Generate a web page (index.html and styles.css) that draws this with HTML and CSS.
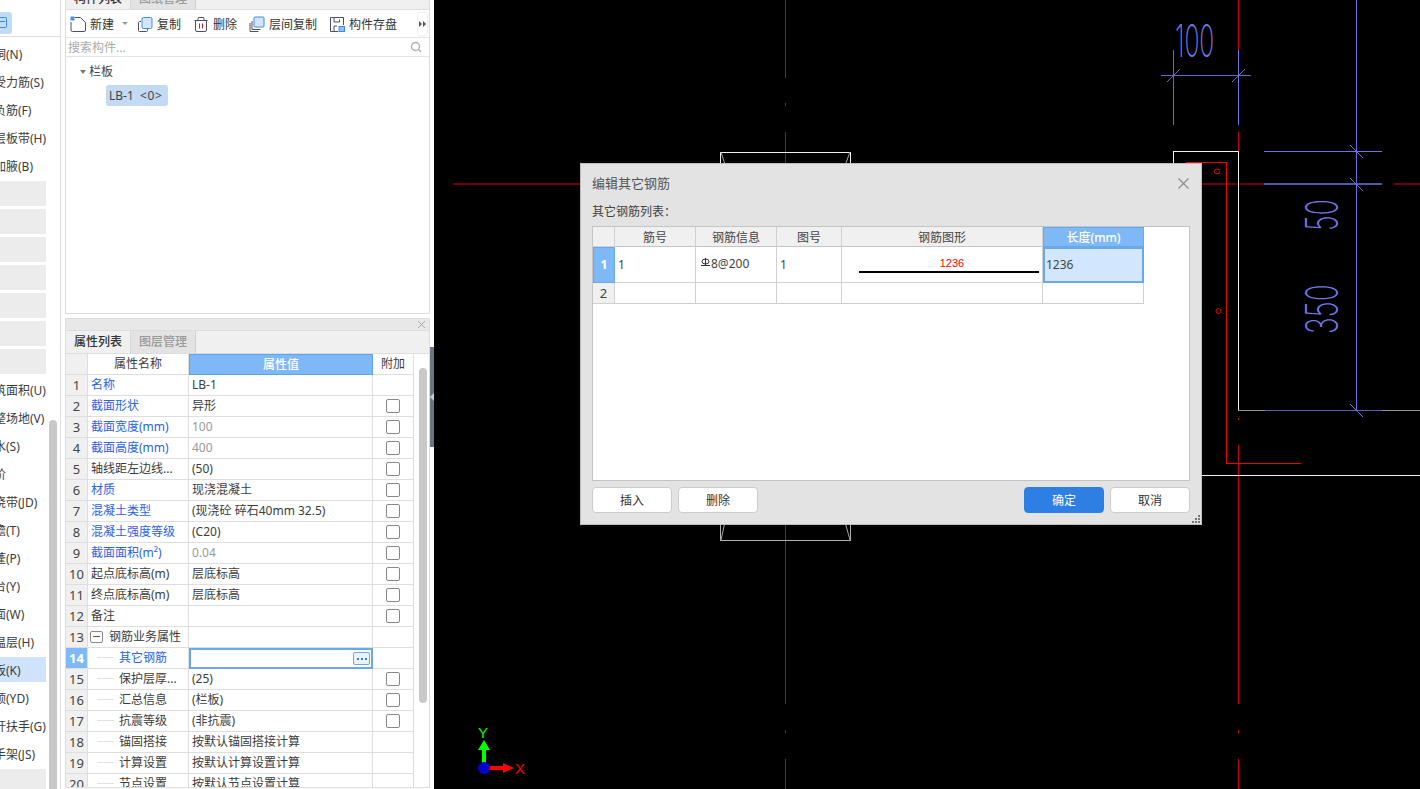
FILE: index.html
```html
<!DOCTYPE html>
<html lang="zh">
<head>
<meta charset="utf-8">
<title>编辑其它钢筋</title>
<link rel="stylesheet" href="styles.css">
</head>
<body>
<div class="app">
  <nav class="side">
    <div class="side-top"><span class="side-ico"><i></i></span></div>
    <ul class="side-list">
      <li>板洞(N)</li><li>板受力筋(S)</li><li>板负筋(F)</li><li>楼层板带(H)</li><li>板加腋(B)</li>
      <li class="blk"></li><li class="blk"></li><li class="blk"></li><li class="blk"></li><li class="blk"></li><li class="blk"></li><li class="blk"></li>
      <li>建筑面积(U)</li><li>平整场地(V)</li><li>散水(S)</li><li>台阶</li><li>后浇带(JD)</li><li>挑檐(T)</li><li>雨蓬(P)</li><li>阳台(Y)</li><li>屋面(W)</li><li>保温层(H)</li><li class="sel">栏板(K)</li><li>压顶(YD)</li><li>栏杆扶手(G)</li><li>脚手架(JS)</li><li class="blk"></li>
    </ul>
    <div class="side-thumb"></div>
  </nav>

  <div class="mid">
    <section class="panel panel-top">
      <div class="tabs"><span class="tab on">构件列表</span><span class="tab">图纸管理</span></div>
      <div class="toolbar">
        <span class="tool">
          <svg width="16" height="16" viewBox="0 0 16 16"><path d="M5 1.500H10.500L15.500 6.500V14A1.500 1.500 0 0 1 14 15.500H2.500A1.500 1.500 0 0 1 1 14V6" fill="none" stroke="#4a5060"/><rect x="0.500" y="0.500" width="4" height="4" fill="#4a90e8"/></svg>新建<b class="drop"></b></span>
        <span class="tool">
          <svg width="16" height="16" viewBox="0 0 16 16"><path d="M4 5.500H2.500A1 1 0 0 0 1.500 6.500V14.500A1 1 0 0 0 2.500 15.500H9.500A1 1 0 0 0 10.500 14.500V13" fill="none" stroke="#4a5060"/><rect x="5" y="1.500" width="10" height="11" rx="1.500" fill="#d3e6fb" stroke="#3f8ae6"/></svg>复制</span>
        <span class="tool">
          <svg width="16" height="16" viewBox="-1 0 16 16"><path d="M0.500 4.500H13.500M1.500 4.500V14A1.500 1.500 0 0 0 3 15.500H11A1.500 1.500 0 0 0 12.500 14V4.500M4 4.500V2.500A1 1 0 0 1 5 1.500H9A1 1 0 0 1 10 2.500V4.500" fill="none" stroke="#4a5060"/><path d="M5.500 7.500V12.500M8.500 7.500V12.500" stroke="#e02020"/></svg>删除</span>
        <span class="tool">
          <svg width="16" height="16" viewBox="0 0 16 16"><path d="M1 7V15.500H9.500M3 5V13.500H11.500" fill="none" stroke="#4a5060"/><rect x="5" y="1" width="10" height="10" rx="1" fill="#d3e6fb" stroke="#3f8ae6"/></svg>层间复制</span>
        <span class="tool">
          <svg width="16" height="16" viewBox="0 0 16 16"><path d="M9 15.500H1.500V1.500H14.500V9M5 1.500V6H10.500V3.500M5 15.500V10H8" fill="none" stroke="#4a5060"/><rect x="10" y="10.500" width="5.500" height="5" fill="#8fc0f5" stroke="#3f8ae6"/></svg>构件存盘</span>
        <span class="more"><i></i><i></i></span>
      </div>
      <div class="search"><span>搜索构件...</span>
        <svg width="12" height="12" viewBox="0 0 12 12"><circle cx="5.500" cy="5.500" r="4" fill="none" stroke="#b0b0b0" stroke-width="1.300"/><path d="M8.500 8.500L11 11" stroke="#b0b0b0" stroke-width="1.500"/></svg>
      </div>
      <div class="tree">
        <div class="tree-root"><b class="caret"></b>栏板</div>
        <div class="tree-leaf">LB-1 &nbsp;<span class="leaf-n">&lt;0&gt;</span></div>
      </div>
    </section>

    <section class="panel panel-bot">
      <div class="panel-head"><svg width="9" height="9" viewBox="0 0 9 9"><path d="M1 1L8 8M8 1L1 8" stroke="#aaa"/></svg></div>
      <div class="tabs tabs-low"><span class="tab on">属性列表</span><span class="tab">图层管理</span></div>
      <div class="prop-wrap">
        <div class="prop-grid">
          <div class="c n"></div><div class="c h">属性名称</div><div class="c h hv">属性值</div><div class="c h hc">附加</div>

          <div class="c n">1</div><div class="c k">名称</div><div class="c v">LB-1</div><div class="c a"></div>
          <div class="c n">2</div><div class="c k">截面形状</div><div class="c v">异形</div><div class="c a"><i class="chk"></i></div>
          <div class="c n">3</div><div class="c k">截面宽度(mm)</div><div class="c v g">100</div><div class="c a"><i class="chk"></i></div>
          <div class="c n">4</div><div class="c k">截面高度(mm)</div><div class="c v g">400</div><div class="c a"><i class="chk"></i></div>
          <div class="c n">5</div><div class="c">轴线距左边线...</div><div class="c v">(50)</div><div class="c a"><i class="chk"></i></div>
          <div class="c n">6</div><div class="c k">材质</div><div class="c v">现浇混凝土</div><div class="c a"><i class="chk"></i></div>
          <div class="c n">7</div><div class="c k">混凝土类型</div><div class="c v">(现浇砼 碎石40mm 32.5)</div><div class="c a"><i class="chk"></i></div>
          <div class="c n">8</div><div class="c k">混凝土强度等级</div><div class="c v">(C20)</div><div class="c a"><i class="chk"></i></div>
          <div class="c n">9</div><div class="c k">截面面积(m²)</div><div class="c v g">0.04</div><div class="c a"><i class="chk"></i></div>
          <div class="c n">10</div><div class="c">起点底标高(m)</div><div class="c v">层底标高</div><div class="c a"><i class="chk"></i></div>
          <div class="c n">11</div><div class="c">终点底标高(m)</div><div class="c v">层底标高</div><div class="c a"><i class="chk"></i></div>
          <div class="c n">12</div><div class="c">备注</div><div class="c v"></div><div class="c a"><i class="chk"></i></div>
          <div class="c n">13</div><div class="c"><i class="minus"></i>钢筋业务属性</div><div class="c v"></div><div class="c a"></div>
          <div class="c n sel">14</div><div class="c sub k"><i class="dash"></i>其它钢筋</div><div class="c v edit"><span class="dots"><i></i><i></i><i></i></span></div><div class="c a"></div>
          <div class="c n">15</div><div class="c sub"><i class="dash"></i>保护层厚...</div><div class="c v">(25)</div><div class="c a"><i class="chk"></i></div>
          <div class="c n">16</div><div class="c sub"><i class="dash"></i>汇总信息</div><div class="c v">(栏板)</div><div class="c a"><i class="chk"></i></div>
          <div class="c n">17</div><div class="c sub"><i class="dash"></i>抗震等级</div><div class="c v">(非抗震)</div><div class="c a"><i class="chk"></i></div>
          <div class="c n">18</div><div class="c sub"><i class="dash"></i>锚固搭接</div><div class="c v">按默认锚固搭接计算</div><div class="c a"></div>
          <div class="c n">19</div><div class="c sub"><i class="dash"></i>计算设置</div><div class="c v">按默认计算设置计算</div><div class="c a"></div>
          <div class="c n">20</div><div class="c sub"><i class="dash"></i>节点设置</div><div class="c v">按默认节点设置计算</div><div class="c a"></div>
        </div>
        <div class="prop-scroll"><div class="prop-thumb"></div></div>
      </div>
    </section>
    <div class="splitter"></div>
  </div>

  <main class="canvas">
    <svg class="cad" width="986" height="789" viewBox="434 0 986 789">
      <g fill="none" stroke-width="1" shape-rendering="crispEdges">
        <path d="M453 184H580" stroke="#700008" stroke-width="2"/>
        <path d="M1202 184H1264M1394 184H1420" stroke="#700008" stroke-width="2"/>
        <path d="M785.500 0V78M785.500 103V106M785.500 132V163M785.500 524V704M785.500 730V733M785.500 759V789" stroke="#c80014"/>
        <path d="M1238.500 0V50M1238.500 132V152M1238.500 418V420M1238.500 445V704M1238.500 730V733M1238.500 759V789" stroke="#c80014"/>
        <path d="M1238.500 50V125" stroke="#7078e8"/>
        <path d="M1173.500 50V125M1161 75.500H1251" stroke="#6468c8"/>
        <path d="M1356.500 0V411M1264 151.500H1382" stroke="#6c70e0"/>
        <path d="M1264 184H1382" stroke="#5458a8" stroke-width="2"/>
        <path d="M1173.500 163V151.500H1238.500V410.500" stroke="#f0f0f0"/>
        <path d="M1238 410.500H1265M1382 410.500H1420" stroke="#909090"/>
        <path d="M1265 410.500H1382" stroke="#5a5eb8" stroke-width="1"/>
        <path d="M1201 475.500H1420" stroke="#f0f0f0"/>
        <path d="M720.500 163V152H850.500V163" stroke="#f0f0f0"/>
        <path d="M720.500 524V540.500H850.500V524" stroke="#b0b0b0"/>
        <path d="M1186 162.500H1226.500V463.500H1301" stroke="#f00000"/>
      </g>
      <g fill="none" stroke-width="1">
        <path d="M721 152L724.500 163M850 152L846 163M724.500 524L721 540M845.500 524L850 540" stroke="#a8a8a8"/>
        <path d="M1167 82L1180 69M1232 82L1245 69" stroke="#6468c8"/>
        <path d="M1350 145L1363 158M1350 178L1363 191M1350 404L1363 417" stroke="#6c70e0"/>
        <circle cx="1217" cy="171.500" r="2.500" stroke="#f00000"/>
        <circle cx="1218.500" cy="311" r="2.500" stroke="#f00000"/>
      </g>
      <text class="dim" transform="translate(1175 57) scale(0.55 1)">100</text>
      <text class="dim" transform="translate(1338 231) rotate(-90) scale(0.6 1)">50</text>
      <text class="dim" transform="translate(1338 334) rotate(-90) scale(0.62 1)">350</text>
      <g>
        <path d="M484 745V766" stroke="#00ff00" stroke-width="4"/>
        <path d="M484 740L490 750H478Z" fill="#00ff00"/>
        <path d="M486 768H506" stroke="#ff0000" stroke-width="4"/>
        <path d="M514 768L503 763V773Z" fill="#ff0000"/>
        <circle cx="484" cy="768" r="6" fill="#0000d0"/>
        <text class="axis ay" x="478" y="738">Y</text>
        <text class="axis ax" x="515" y="774">X</text>
      </g>
    </svg>

    <div class="dialog">
      <header class="dlg-head">
        <h1>编辑其它钢筋</h1>
        <svg width="13" height="13" viewBox="0 0 13 13"><path d="M1.500 1.500L11.500 11.500M11.500 1.500L1.500 11.500" stroke="#8a8a8a" stroke-width="1.100"/></svg>
      </header>
      <div class="dlg-label">其它钢筋列表：</div>
      <div class="dlg-table">
        <div class="rgrid">
          <div class="r n2"></div><div class="r rh">筋号</div><div class="r rh">钢筋信息</div><div class="r rh">图号</div><div class="r rh">钢筋图形</div><div class="r rh rh-sel">长度(mm)</div>
          <div class="r n2 sel">1</div><div class="r">1</div><div class="r r-bar"><svg class="bar-mark" width="9" height="9" viewBox="0 0 9 9"><ellipse cx="4.500" cy="3.500" rx="3.500" ry="2.500" fill="none" stroke="#333"/><path d="M4.500 0V7.500M0 7.500H9" stroke="#333"/></svg>8@200</div><div class="r">1</div>
          <div class="r shape"><span class="len">1236</span><span class="line"></span></div>
          <div class="r r-sel">1236</div>
          <div class="r n2">2</div><div class="r"></div><div class="r"></div><div class="r"></div><div class="r"></div><div class="r"></div>
        </div>
      </div>
      <footer class="dlg-foot">
        <button class="btn">插入</button>
        <button class="btn">删除</button>
        <span class="spacer"></span>
        <button class="btn primary">确定</button>
        <button class="btn">取消</button>
      </footer>
      <span class="grip"><i></i><i></i><i></i><i></i><i></i><i></i></span>
    </div>
  </main>
</div>
</body>
</html>
```
FILE: styles.css
```css
* { box-sizing: border-box; }
html, body { margin: 0; height: 100%; overflow: hidden; background: #000; }
body, button { font-family: "Noto Sans", "Noto Sans CJK SC", sans-serif; font-size: 12px; color: #3c3c3c; }
i, b { display: inline-block; font-style: normal; }
.app { display: flex; width: 1420px; height: 789px; overflow: hidden; background: #000; }

/* left strip */
.side { position: relative; width: 61px; flex: none; background: #fff; border-right: 1px solid #ddd; overflow: hidden; }
.side-top { height: 37px; padding-top: 12px; border-bottom: 1px solid #ddd; }
.side-ico { display: block; width: 12px; height: 22px; background: #c2dbf5; border-radius: 0 3px 3px 0; position: relative; }
.side-ico i { position: absolute; left: 0; top: 5px; width: 7px; height: 11px; border: 1px solid #3f8ae6; border-left: 0; border-radius: 0 2px 2px 0; }
.side-ico i::after { content: ""; position: absolute; left: 0; right: 1px; top: 3px; height: 1px; background: #3f8ae6; }
.side-list { list-style: none; margin: 0; padding: 3px 0 0; }
.side-list li { height: 28px; line-height: 30px; text-indent: -18px; white-space: nowrap; overflow: hidden; width: 60px; }
.side-list li.blk { width: 46px; background: #ececec; background-clip: padding-box; border-top: 1px solid #fff; border-bottom: 2px solid #fff; }
.side-list li.sel { width: 46px; background: #cfe4fc; background-clip: padding-box; border-top: 1px solid #fff; border-bottom: 2px solid #fff; line-height: 28px; }
.side-thumb { position: absolute; left: 49px; top: 420px; width: 8px; height: 369px; background: #c8c8c8; border-radius: 4px 4px 0 0; }

/* middle */
.mid { position: relative; width: 373px; flex: none; background: #fff; padding: 0 4px 0 4px; display: flex; flex-direction: column; }
.panel { border: 1px solid #ddd; background: #fff; }
.panel-top { height: 327px; margin-top: -13px; flex: none; display: flex; flex-direction: column; }
.tabs { height: 22px; flex: none; display: flex; background: #f0f0f0; border-bottom: 1px solid #ddd; }
.tabs-low { height: 23px; }
.tab { width: 65px; text-align: center; line-height: 21px; font-weight: 500; color: #9a9a9a; background: #e3e3e3; border-right: 1px solid #d0d0d0; }
.tab.on { color: #333; background: #f0f0f0; border-right: 1px solid #d8d8d8; }
.toolbar { height: 28px; flex: none; display: flex; align-items: center; padding-left: 4px; border-bottom: 1px solid #e4e4e4; position: relative; }
.tool { display: inline-flex; align-items: center; gap: 4px; margin-right: 12px; white-space: nowrap; color: #333; }
.tool .drop { width: 0; height: 0; margin-left: 4px; margin-right: -3px; border: 3px solid transparent; border-top: 3px solid #999; border-bottom: 0; }
.more { position: absolute; right: 1px; top: 2px; width: 11px; height: 24px; display: flex; align-items: center; justify-content: center; gap: 1px; border: 1px solid #eee; border-radius: 3px; background: #fff; }
.more i { width: 0; height: 0; border-left: 3px solid #555; border-top: 3px solid transparent; border-bottom: 3px solid transparent; }
.search { height: 19px; flex: none; display: flex; align-items: center; justify-content: space-between; padding: 0 7px 0 2px; border-bottom: 1px solid #e4e4e4; color: #aaa; line-height: 18px; }
.search span { padding-top: 1px; }
.tree { flex: 1; padding: 4px 0 0 0; }
.tree-root { height: 22px; line-height: 22px; padding-left: 14px; color: #444; display: flex; align-items: center; gap: 3px; }
.caret { width: 0; height: 0; border: 3px solid transparent; border-top: 4px solid #777; border-bottom: 0; }
.tree-leaf { margin: 2px 0 0 40px; width: 62px; height: 21px; line-height: 21px; padding-left: 3px; background: #c2daf3; border-radius: 3px; color: #444; white-space: nowrap; }
.leaf-n { letter-spacing: 0.600px; }

.panel-bot { margin-top: 4px; height: 470px; flex: none; overflow: hidden; display: flex; flex-direction: column; }
.panel-head { flex: none; background: #e8e8e8; display: flex; justify-content: flex-end; align-items: center; padding-right: 3px; border-bottom: 1px solid #ddd; height: 12px; }
.prop-wrap { display: flex; flex: 1; overflow: hidden; }
.prop-grid { width: 349px; flex: none; display: grid; grid-template-columns: 22px 101px 184px 41px; grid-auto-rows: 21px; align-content: start; }
.c { border-right: 1px solid #dedede; border-bottom: 1px solid #dedede; padding-left: 3px; line-height: 20px; white-space: nowrap; overflow: hidden; color: #3c3c3c; position: relative; }
.c.n { background: #f0f0f0; padding: 0; text-align: center; font-size: 13px; color: #444; line-height: 20px; }
.c.n.sel { background: #7fb8f7; color: #fff; font-weight: 700; }
.c.h { text-align: center; padding: 0; }
.c.hv { background: #7fb8f7; color: #fff; font-weight: 500; border: 1px solid #5fa3ea; line-height: 19px; }
.c.k { color: #2a62e8; }
.c.v { padding-left: 3px; }
.c.g { color: #999; }
.c.a { display: flex; justify-content: center; align-items: center; padding: 0; }
.chk { width: 14px; height: 14px; border: 1px solid #888; border-radius: 2px; background: #fff; }
.minus { width: 13px; height: 12px; border: 1px solid #888; border-radius: 2px; margin: 0 6px 0 -1px; vertical-align: -2px; position: relative; }
.minus::after { content: ""; position: absolute; left: 2px; right: 2px; top: 4px; height: 1px; background: #555; }
.sub { padding-left: 31px; }
.dash { position: absolute; left: 9px; top: 9px; width: 17px; height: 1px; background: #e2e2e2; }
.edit { border: 2px solid #6aa9e8; position: relative; }
.dots { position: absolute; right: 1px; top: 2px; width: 17px; height: 13px; border: 1px solid #6aa9e8; border-radius: 2px; background: #eaf3fd; display: flex; align-items: center; justify-content: center; gap: 2px; }
.dots i { width: 2px; height: 2px; background: #2f7fe0; }
.prop-scroll { flex: 1; padding: 14px 0 0 4px; }
.prop-thumb { width: 8px; height: 335px; border-radius: 4px; background: #c8c8c8; }
.splitter { position: absolute; right: 0; top: 347px; width: 4px; height: 100px; background: #6b7480; }
.splitter::after { content: ""; position: absolute; left: 0; top: 46px; border: 4px solid transparent; border-left: 0; border-right: 4px solid #c8ccd2; }

/* cad */
.canvas { position: relative; flex: 1; background: #000; overflow: hidden; }
.cad { display: block; }
.dim { font-family: "Inter", sans-serif; font-weight: 200; font-size: 45px; fill: #7478e8; }
.axis { font-family: "Liberation Sans", sans-serif; font-size: 15px; }
.ay { fill: #00ff00; }
.ax { fill: #ff0000; }

/* dialog */
.dialog { position: absolute; left: 146px; top: 163px; width: 622px; height: 362px; background: #e3e3e3; border: 1px solid #bdbdbd; padding: 0 11px; display: flex; flex-direction: column; }
.dlg-head { height: 39px; flex: none; display: flex; align-items: center; justify-content: space-between; }
.dlg-head h1 { margin: 0 0 2px; font-size: 13px; font-weight: 400; color: #555; line-height: 18px; }
.dlg-label { height: 23px; line-height: 18px; color: #444; flex: none; }
.dlg-table { height: 255px; flex: none; background: #fff; border: 1px solid #c4c4c4; }
.rgrid { display: grid; width: 551px; grid-template-columns: 22px 81px 81px 65px 201px 101px; grid-template-rows: 20px 36px 21px; }
.r { border-right: 1px solid #d0d0d0; border-bottom: 1px solid #d0d0d0; padding-left: 3px; line-height: 35px; color: #444; white-space: nowrap; position: relative; }
.rh { background: #f0f0f0; text-align: center; line-height: 21px; padding: 0; border-bottom-color: #c4c4c4; }
.rh-sel { background: #7fb8f7; color: #fff; font-weight: 500; border: 1px solid #6aa9e8; line-height: 19px; }
.n2 { background: #f0f0f0; padding: 0; text-align: center; line-height: 21px; font-size: 13px; }
.n2.sel { background: #7fb8f7; color: #fff; font-weight: 700; line-height: 33px; border: 1px solid #6aa9e8; }
.r-sel { background: #d2e7fd; border: 2px solid #6aa9e8; line-height: 31px; padding-left: 1px; }
.r-bar { padding-left: 5px; line-height: 33px; }
.bar-mark { margin-right: 1px; vertical-align: 1px; }
.len { position: absolute; left: 20px; right: 0; top: 6px; text-align: center; line-height: 20px; font-family: "Liberation Sans", sans-serif; font-size: 11px; color: #f00; }
.line { position: absolute; left: 17px; width: 180px; top: 24px; height: 2px; background: #000; }
.dlg-foot { flex: none; display: flex; gap: 6px; margin-top: 6px; height: 26px; }
.spacer { flex: 1; }
.btn { width: 80px; height: 26px; padding: 0; border: 1px solid #ccc; border-radius: 4px; background: #fff; color: #333; }
.btn.primary { background: #2d7fe3; border-color: #2d7fe3; color: #fff; }
.grip { position: absolute; right: 1px; bottom: 1px; width: 9px; height: 9px; }
.grip i { position: absolute; width: 2px; height: 2px; background: #777; }
.grip i:nth-child(1) { right: 0; bottom: 0; }
.grip i:nth-child(2) { right: 3px; bottom: 0; }
.grip i:nth-child(3) { right: 6px; bottom: 0; }
.grip i:nth-child(4) { right: 0; bottom: 3px; }
.grip i:nth-child(5) { right: 3px; bottom: 3px; }
.grip i:nth-child(6) { right: 0; bottom: 6px; }
```
